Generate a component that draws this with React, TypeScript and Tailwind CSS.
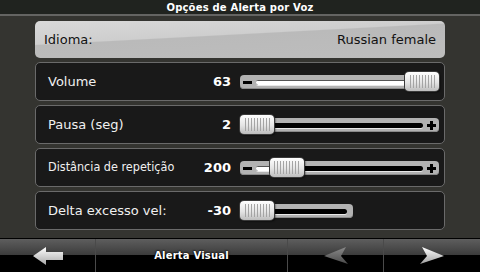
import React from "react";

const font = "font-['DejaVu_Sans','Liberation_Sans',sans-serif]";

function Thumb({ left }: { left: number }) {
  return (
    <div
      className="absolute top-0 h-[19px] w-[34px] rounded-[4px] bg-[linear-gradient(to_bottom,#ffffff,#e4e4e4_55%,#bdbdbd)] shadow-[0_0_0_1px_#3a3a3a,1px_1px_2px_#000] flex items-center justify-center gap-[2px]"
      style={{ left }}
    >
      {Array.from({ length: 9 }).map((_, i) => (
        <div key={i} className="w-[1px] h-[13px] bg-[#a4a4a4]" />
      ))}
    </div>
  );
}

function Slider({
  width,
  value,
  signs = true,
}: {
  width: number;
  value: number;
  signs?: boolean;
}) {
  const grooveL = signs ? 16 : 18;
  const grooveR = signs ? 16 : 6;
  const thumbLeft = value * (width - 34);
  const fill = Math.max(0, thumbLeft + 17 - grooveL);
  return (
    <div className="relative h-[19px]" style={{ width }}>
      <div className="absolute left-0 right-0 top-[3px] h-[14px] rounded-[4px] bg-[#b2b2b2] shadow-[inset_0_-1px_0_#8a8a8a]">
        {signs && (
          <>
            <div className="absolute left-[3px] top-[6px] w-[9px] h-[3px] bg-black" />
            <div className="absolute right-[3px] top-[6px] w-[9px] h-[3px] bg-black" />
            <div className="absolute right-[6px] top-[3px] w-[3px] h-[9px] bg-black" />
          </>
        )}
        <div
          className="absolute top-[5px] h-[5px] rounded-full bg-black overflow-hidden shadow-[0_1px_0_#e8e8e8]"
          style={{ left: grooveL, right: grooveR }}
        >
          <div className="h-full bg-white border-t border-[#555]" style={{ width: fill }} />
        </div>
      </div>
      <Thumb left={thumbLeft} />
    </div>
  );
}

function Row({
  label,
  value,
  children,
  narrow,
}: {
  label: string;
  value: string;
  children: React.ReactNode;
  narrow?: boolean;
}) {
  return (
    <div className="h-[39px] rounded-[5px] border border-[#6a6a6a] bg-[#191919] flex items-center pl-[12px]">
      <div className="w-[183px] flex justify-between items-center">
        <span
          className={
            narrow
              ? "text-[12.5px] text-[#f0f0f0] font-['DejaVu_Sans_Condensed','DejaVu_Sans',sans-serif] [font-stretch:condensed]"
              : "text-[13px] text-[#f0f0f0]"
          }
        >
          {label}
        </span>
        <span className="text-[13px] font-bold text-white">{value}</span>
      </div>
      <div className="ml-[9px]">{children}</div>
    </div>
  );
}

function BackArrow() {
  return (
    <svg width="30" height="18" viewBox="0 0 30 18">
      <defs>
        <linearGradient id="ba" x1="0" y1="0" x2="0" y2="1">
          <stop offset="0" stopColor="#ffffff" />
          <stop offset="1" stopColor="#a8a8a8" />
        </linearGradient>
      </defs>
      <polygon points="0,9 13,0 13,5 30,5 30,13 13,13 13,18" fill="url(#ba)" />
    </svg>
  );
}

function NavArrow({ dir, dim }: { dir: "l" | "r"; dim?: boolean }) {
  const pts = dir === "r" ? "2,0 24,9 0,17 7,9" : "22,0 0,9 24,17 17,9";
  return (
    <svg width="24" height="17" viewBox="0 0 24 17">
      <defs>
        <linearGradient id={"na" + dir} x1="0" y1="0" x2="0" y2="1">
          <stop offset="0" stopColor={dim ? "#8a8a8a" : "#ffffff"} />
          <stop offset="1" stopColor={dim ? "#4a4a4a" : "#a0a0a0"} />
        </linearGradient>
      </defs>
      <polygon points={pts} fill={`url(#na${dir})`} />
    </svg>
  );
}

function BarButton({ w, children }: { w: string; children: React.ReactNode }) {
  return (
    <div
      className={`${w} h-full flex items-center justify-center bg-[linear-gradient(to_bottom,#5e5e5e,#3c3c3c_48%,#000_49%,#000)]`}
    >
      {children}
    </div>
  );
}

export default function App() {
  return (
    <div className={`w-[480px] h-[272px] bg-[#343430] overflow-hidden flex flex-col ${font}`}>
      <div className="h-[14px] bg-[#20231f] flex items-center justify-center text-[10px] font-bold tracking-[0.2px] text-white">
        Opções de Alerta por Voz
      </div>
      <div className="h-[2px] bg-[#646462]" />

      <div className="mx-[35px] mt-[5px] flex flex-col gap-[4px]">
        <div className="h-[37px] rounded-[5px] bg-[linear-gradient(177deg,#d9d9d9,#cecece_40%,#bababa_42%,#bdbdbd)] flex items-center justify-between pl-[9px] pr-[9px] text-[13px] text-[#111]">
          <span>Idioma:</span>
          <span>Russian female</span>
        </div>
        <Row label="Volume" value="63">
          <Slider width={199} value={1} />
        </Row>
        <Row label="Pausa (seg)" value="2">
          <Slider width={199} value={0} />
        </Row>
        <Row label="Distância de repetição" value="200" narrow>
          <Slider width={199} value={0.18} />
        </Row>
        <Row label="Delta excesso vel:" value="-30">
          <Slider width={113} value={0} signs={false} />
        </Row>
      </div>

      <div className="mt-auto h-[34px] border-t border-black flex gap-[1px] bg-[#4a4a4a]">
        <BarButton w="w-[95px]">
          <BackArrow />
        </BarButton>
        <BarButton w="w-[191px]">
          <span className="text-[10px] font-bold tracking-[0.2px] text-white [text-shadow:0_0_2px_#000,0_0_2px_#000]">
            Alerta Visual
          </span>
        </BarButton>
        <BarButton w="w-[95px]">
          <NavArrow dir="l" dim />
        </BarButton>
        <BarButton w="flex-1">
          <NavArrow dir="r" />
        </BarButton>
      </div>
    </div>
  );
}
